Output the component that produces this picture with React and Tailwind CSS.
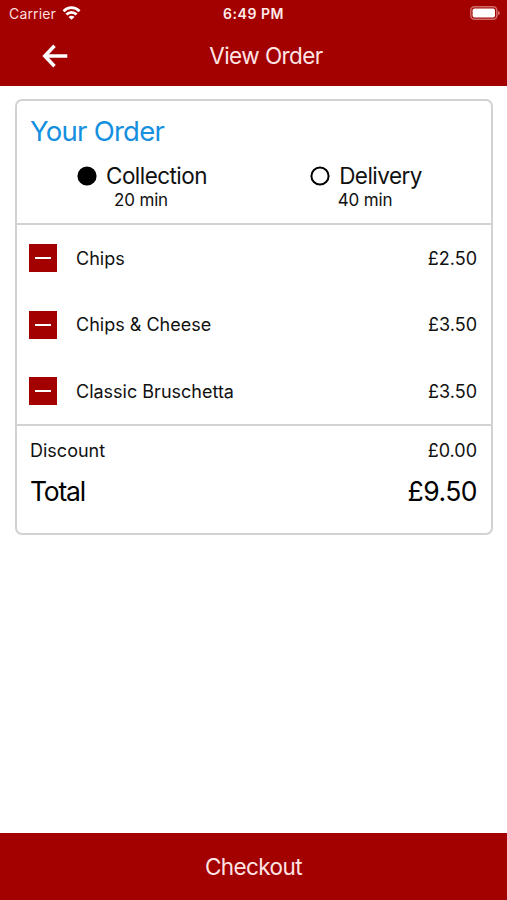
const items = [
  { name: 'Chips', price: '£2.50' },
  { name: 'Chips & Cheese', price: '£3.50' },
  { name: 'Classic Bruschetta', price: '£3.50' },
]

export default function App() {
  return (
    <div className="flex h-[900px] w-[507px] flex-col bg-white font-['Inter','Liberation_Sans',sans-serif] text-[#111]">
      <header className="h-[86px] bg-[#a30000] text-white">
        <StatusBar />
        <div className="grid h-[58px] grid-cols-[110px_1fr_85px] items-center">
          <button className="flex justify-center" aria-label="Back">
            <BackArrow />
          </button>
          <h1 className="text-center text-[22.5px] leading-[28px] tracking-[-0.55px] text-[#ffe4e4]">View Order</h1>
        </div>
      </header>

      <main className="flex-1 pl-[15px] pr-[14px] pt-[13px]">
        <section className="h-[436px] rounded-[7px] border-2 border-[#d2d2d2]">
          <div className="h-[124px] border-b-2 border-[#d2d2d2]">
            <h2 className="px-[13px] pt-[12px] text-[27.5px] leading-[36px] tracking-[-0.75px] text-[#1590e0]">Your Order</h2>
            <div className="grid grid-cols-2 px-[13px] pt-[12px]">
              <OrderType label="Collection" time="20 min" selected />
              <OrderType label="Delivery" time="40 min" />
            </div>
          </div>

          <ul className="h-[201px] border-b-2 border-[#d2d2d2]">
            {items.map((item) => (
              <OrderItem key={item.name} {...item} />
            ))}
          </ul>

          <div className="pl-[13px] pr-[14px] pt-[12px]">
            <div className="flex justify-between text-[18px] leading-[26px]">
              <span>Discount</span>
              <span>£0.00</span>
            </div>
            <div className="flex justify-between pt-[9px] text-[26.5px] leading-[36px] text-black">
              <span className="tracking-[-1.2px]">Total</span>
              <span className="tracking-[-0.5px]">£9.50</span>
            </div>
          </div>
        </section>
      </main>

      <button className="h-[67px] bg-[#a30000] pt-px text-[22.5px] tracking-[-0.6px] text-[#ffe4e4]">Checkout</button>
    </div>
  )
}

function StatusBar() {
  return (
    <div className="grid h-[27px] grid-cols-[1fr_80px_1fr] items-center pl-[9px] pr-[6px] text-[14px]">
      <div className="flex items-center gap-[6px] text-[#ffdede]">
        <span className="tracking-[0.15px]">Carrier</span>
        <svg className="-mt-[2px]" width="19" height="14" viewBox="0 0 18 14" fill="none" stroke="white" strokeWidth="2.7">
          <path d="M1 5.2 C5.6 .5 12.4 .5 17 5.2" />
          <path d="M3.9 8.5 C6.8 5.6 11.2 5.6 14.1 8.5" />
          <path d="M9 13.8 L6 10.9 C7.8 9.3 10.2 9.3 12 10.9 Z" fill="white" stroke="none" />
        </svg>
      </div>
      <span className="-ml-[3px] text-center font-semibold tracking-[0.55px] text-[#ffecec]">6:49 PM</span>
      <svg className="-mt-px justify-self-end" width="31" height="14" viewBox="0 0 31 14">
        <rect x=".8" y=".8" width="26" height="12.4" rx="3.5" fill="none" stroke="#cf6a6a" strokeWidth="1.5" />
        <rect x="2.6" y="2.4" width="22.4" height="9.2" rx="1.8" fill="white" />
        <path d="M28 4.7 C30.4 5.5 30.4 8.5 28 9.3 Z" fill="#cf6a6a" />
      </svg>
    </div>
  )
}

function BackArrow() {
  return (
    <svg width="26" height="24" viewBox="0 0 26 24" fill="none" stroke="white" strokeWidth="3.5">
      <path d="M12.5 1.8 L2.8 12 L12.5 22.2 M2.8 12 H25.3" />
    </svg>
  )
}

function OrderType({ label, time, selected }) {
  return (
    <div className="flex flex-col items-center">
      <div className="flex items-center gap-[9px]">
        <svg width="20" height="20" viewBox="0 0 20 20">
          <circle cx="10" cy="10" r="8.6" fill={selected ? 'black' : 'none'} stroke="black" strokeWidth="2" />
        </svg>
        <span className="text-[22.5px] leading-[30px] tracking-[-0.55px]">{label}</span>
      </div>
      <span className="-mt-px pr-[2px] text-[17px] leading-[20px] tracking-[-0.15px]">{time}</span>
    </div>
  )
}

function OrderItem({ name, price }) {
  return (
    <li className="flex h-[66.6px] items-center pl-[12px] pr-[14px] text-[18px]">
      <button className="flex size-[28px] items-center justify-center bg-[#a30000]" aria-label="Remove">
        <span className="h-[2px] w-[16px] bg-white" />
      </button>
      <span className="ml-[19px] flex-1">{name}</span>
      <span>{price}</span>
    </li>
  )
}
